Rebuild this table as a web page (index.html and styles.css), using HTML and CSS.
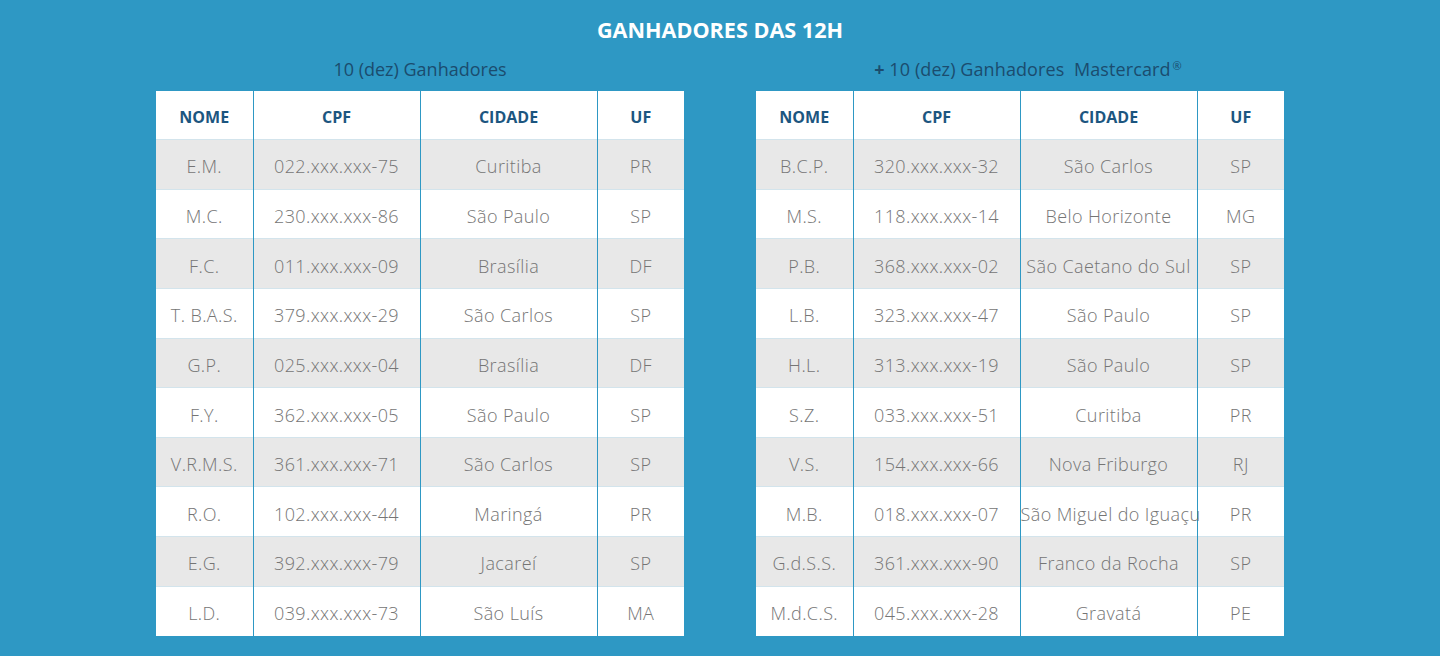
FILE: index.html
```html
<!DOCTYPE html>
<html lang="pt-BR">
<head>
<meta charset="utf-8">
<title>Ganhadores das 12h</title>
<link rel="stylesheet" href="styles.css">
</head>
<body>
<main class="page">
  <h1 class="title">GANHADORES DAS 12H</h1>
  <div class="columns">
    <section class="block">
      <h2 class="subtitle">10 (dez) Ganhadores</h2>
      <table class="winners">
        <colgroup><col class="c-nome"><col class="c-cpf"><col class="c-cidade"><col class="c-uf"></colgroup>
        <thead><tr><th>NOME</th><th>CPF</th><th>CIDADE</th><th>UF</th></tr></thead>
        <tbody>
          <tr><td>E.M.</td><td>022.xxx.xxx-75</td><td>Curitiba</td><td>PR</td></tr>
          <tr><td>M.C.</td><td>230.xxx.xxx-86</td><td>São Paulo</td><td>SP</td></tr>
          <tr><td>F.C.</td><td>011.xxx.xxx-09</td><td>Brasília</td><td>DF</td></tr>
          <tr><td>T. B.A.S.</td><td>379.xxx.xxx-29</td><td>São Carlos</td><td>SP</td></tr>
          <tr><td>G.P.</td><td>025.xxx.xxx-04</td><td>Brasília</td><td>DF</td></tr>
          <tr><td>F.Y.</td><td>362.xxx.xxx-05</td><td>São Paulo</td><td>SP</td></tr>
          <tr><td>V.R.M.S.</td><td>361.xxx.xxx-71</td><td>São Carlos</td><td>SP</td></tr>
          <tr><td>R.O.</td><td>102.xxx.xxx-44</td><td>Maringá</td><td>PR</td></tr>
          <tr><td>E.G.</td><td>392.xxx.xxx-79</td><td>Jacareí</td><td>SP</td></tr>
          <tr><td>L.D.</td><td>039.xxx.xxx-73</td><td>São Luís</td><td>MA</td></tr>
        </tbody>
      </table>
    </section>
    <section class="block">
      <h2 class="subtitle subtitle-mc"><b>+</b> 10 (dez) Ganhadores&nbsp; Mastercard<sup>®</sup></h2>
      <table class="winners">
        <colgroup><col class="c-nome"><col class="c-cpf"><col class="c-cidade"><col class="c-uf"></colgroup>
        <thead><tr><th>NOME</th><th>CPF</th><th>CIDADE</th><th>UF</th></tr></thead>
        <tbody>
          <tr><td>B.C.P.</td><td>320.xxx.xxx-32</td><td>São Carlos</td><td>SP</td></tr>
          <tr><td>M.S.</td><td>118.xxx.xxx-14</td><td>Belo Horizonte</td><td>MG</td></tr>
          <tr><td>P.B.</td><td>368.xxx.xxx-02</td><td>São Caetano do Sul</td><td>SP</td></tr>
          <tr><td>L.B.</td><td>323.xxx.xxx-47</td><td>São Paulo</td><td>SP</td></tr>
          <tr><td>H.L.</td><td>313.xxx.xxx-19</td><td>São Paulo</td><td>SP</td></tr>
          <tr><td>S.Z.</td><td>033.xxx.xxx-51</td><td>Curitiba</td><td>PR</td></tr>
          <tr><td>V.S.</td><td>154.xxx.xxx-66</td><td>Nova Friburgo</td><td>RJ</td></tr>
          <tr><td>M.B.</td><td>018.xxx.xxx-07</td><td>São Miguel do Iguaçu</td><td>PR</td></tr>
          <tr><td>G.d.S.S.</td><td>361.xxx.xxx-90</td><td>Franco da Rocha</td><td>SP</td></tr>
          <tr><td>M.d.C.S.</td><td>045.xxx.xxx-28</td><td>Gravatá</td><td>PE</td></tr>
        </tbody>
      </table>
    </section>
  </div>
</main>
</body>
</html>
```

FILE: styles.css
```css
* { box-sizing: border-box; }
html, body { margin: 0; padding: 0; }
body {
  background: #2e98c4;
  font-family: "Open Sans", "Liberation Sans", sans-serif;
  width: 1440px;
  height: 656px;
  overflow: hidden;
}
.page {
  padding-top: 16px;
}
.title {
  margin: 0;
  text-align: center;
  color: #ffffff;
  font-size: 21.6px;
  font-weight: 700;
  line-height: 28px;
}
.columns {
  display: flex;
  justify-content: center;
  gap: 72px;
  margin-top: 13px;
}
.block {
  width: 528px;
}
.subtitle {
  margin: 0 0 10px;
  text-align: center;
  color: #1b4c6e;
  font-size: 18px;
  font-weight: 400;
  line-height: 24px;
}
.subtitle-mc {
  padding-left: 16px;
  letter-spacing: 0.1px;
}
.subtitle b { font-weight: 700; }
.subtitle sup {
  font-size: 11px;
  vertical-align: top;
  line-height: 18px;
  margin-left: 2px;
}
.winners {
  width: 528px;
  border-collapse: collapse;
  table-layout: fixed;
  background: #ffffff;
}
.c-nome { width: 97px; }
.c-cpf { width: 167px; }
.c-cidade { width: 177px; }
.c-uf { width: 87px; }
.winners th {
  height: 48.5px;
  padding: 4px 0 0;
  text-align: center;
  color: #1c5680;
  font-size: 16px;
  font-weight: 700;
  background: #ffffff;
}
.winners td {
  height: 49.65px;
  padding: 4px 0 0;
  text-align: center;
  color: #757575;
  font-size: 18px;
  font-weight: 300;
  letter-spacing: 0.4px;
  white-space: nowrap;
  border-top: 1px solid #d3e4ec;
}
.winners th + th,
.winners td + td {
  border-left: 1px solid #2e98c4;
}
.winners tbody tr:nth-child(odd) td { background: #e8e8e8; }
.winners tbody tr:nth-child(even) td { background: #ffffff; }
```
